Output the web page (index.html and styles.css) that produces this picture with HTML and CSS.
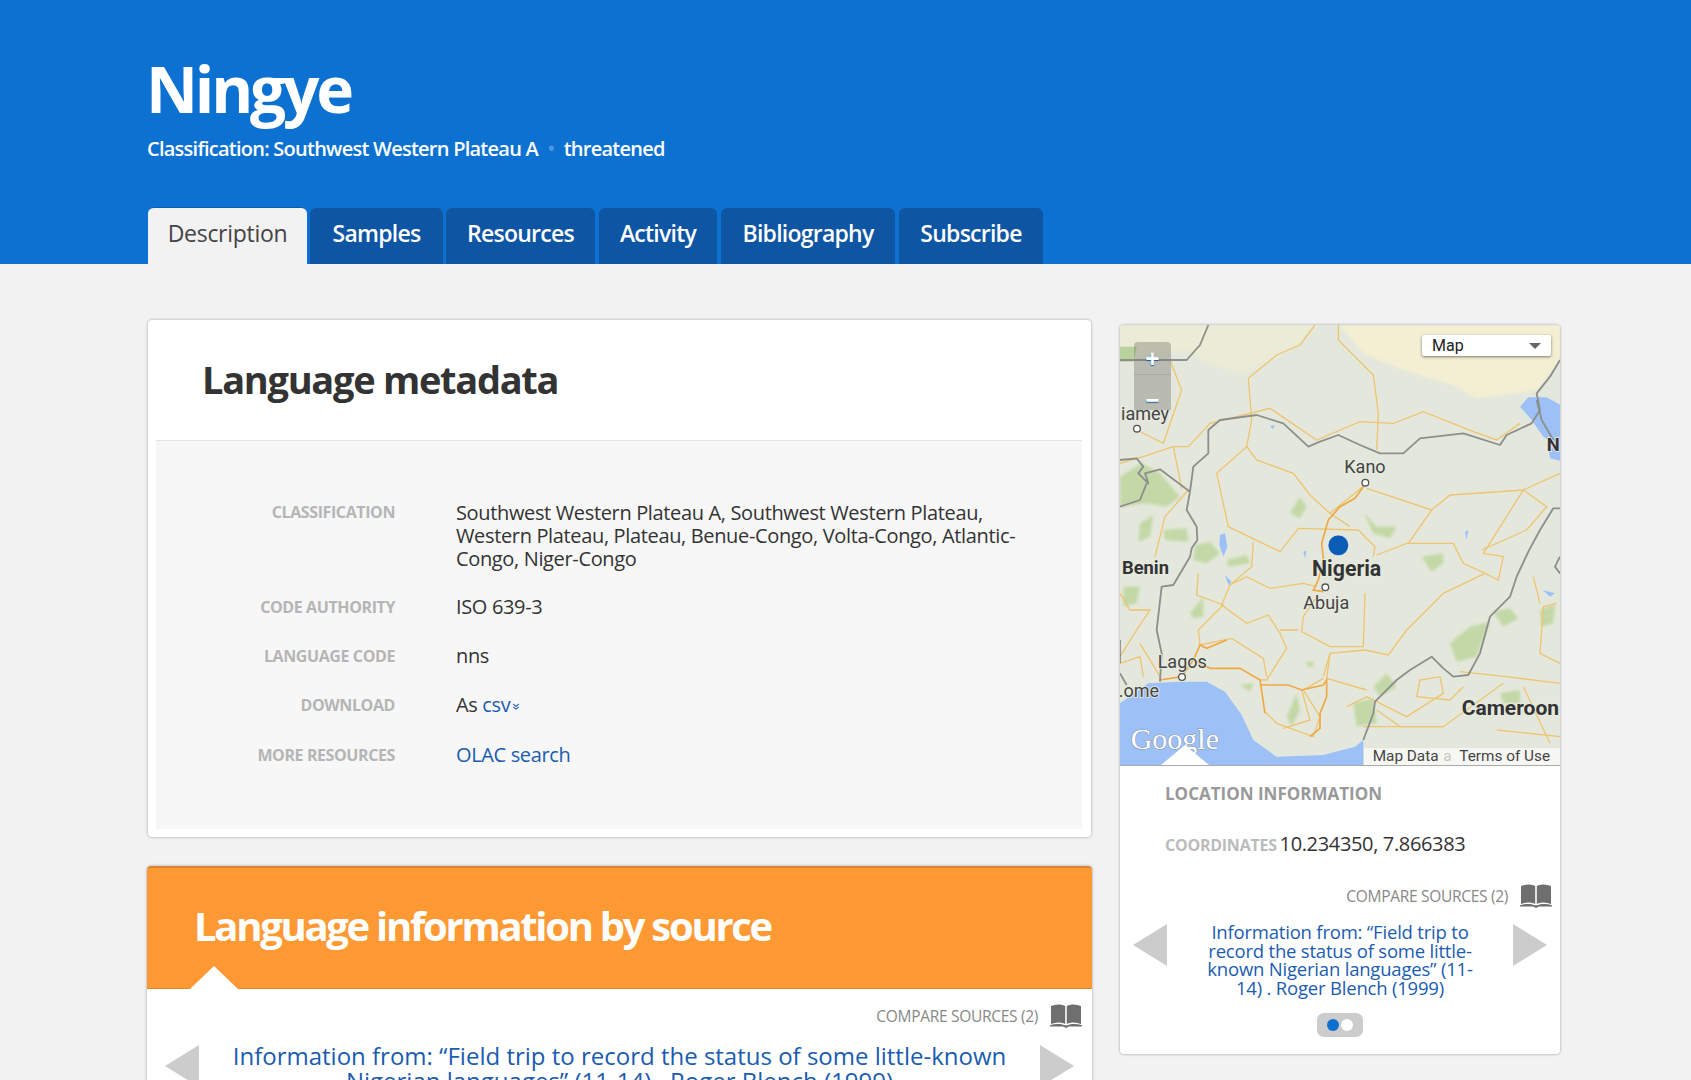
FILE: index.html
```html
<!DOCTYPE html>
<html lang="en">
<head>
    <meta charset="UTF-8">
    <title>Ningye</title>
    <link rel="stylesheet" href="styles.css">
</head>
<body>

<header class="site-header">
    <div class="title-block">
        <h1>Ningye</h1>
        <p class="subtitle">Classification: Southwest Western Plateau A <span class="sep">&bull;</span> threatened</p>
    </div>
    <nav class="tabs">
        <a class="tab active" href="#">Description</a>
        <a class="tab tab-samples" href="#">Samples</a>
        <a class="tab tab-resources" href="#">Resources</a>
        <a class="tab tab-activity" href="#">Activity</a>
        <a class="tab tab-biblio" href="#">Bibliography</a>
        <a class="tab tab-subscribe" href="#">Subscribe</a>
    </nav>
</header>

<main class="page">
    <div class="left-column">
        <section class="card metadata-card">
            <h2>Language metadata</h2>
            <div class="metadata">
                <div class="meta-row">
                    <div class="meta-label">Classification</div>
                    <div class="meta-value">Southwest Western Plateau A, Southwest Western Plateau, Western Plateau, Plateau, Benue-Congo, Volta-Congo, Atlantic-Congo, Niger-Congo</div>
                </div>
                <div class="meta-row">
                    <div class="meta-label">Code authority</div>
                    <div class="meta-value">ISO 639-3</div>
                </div>
                <div class="meta-row">
                    <div class="meta-label">Language code</div>
                    <div class="meta-value">nns</div>
                </div>
                <div class="meta-row">
                    <div class="meta-label">Download</div>
                    <div class="meta-value">As <a href="#">csv</a><span class="csv-arrow">&#187;</span></div>
                </div>
                <div class="meta-row">
                    <div class="meta-label">More resources</div>
                    <div class="meta-value"><a href="#">OLAC search</a></div>
                </div>
            </div>
        </section>

        <section class="card source-card">
            <div class="source-head">
                <h2>Language information by source</h2>
                <span class="notch"></span>
            </div>
            <div class="compare compare-wide">
                <span>Compare sources (2)</span>
                <svg class="book" viewBox="0 0 32 24"><path d="M1 2C6 0 11 0 15.2 2V20C11 18 6 18 1 20ZM16.8 2C21 0 26 0 31 2V20C26 18 21 18 16.8 20ZM0 21.2C5 19.5 11 19.5 14.5 21.2H17.5C21 19.5 27 19.5 32 21.2V22.4H19L16 24 13 22.4H0Z" fill="#6f6f6f"/></svg>
            </div>
            <div class="carousel carousel-wide">
                <span class="arrow arrow-left"></span>
                <a class="carousel-text" href="#">Information from: &ldquo;Field trip to record the status of some little-known Nigerian languages&rdquo; (11-14) . Roger Blench (1999)</a>
                <span class="arrow arrow-right"></span>
            </div>
        </section>
    </div>

    <aside class="card side-card">
        <div class="map">
            <svg class="map-art" viewBox="30 45 1320 1320">
                <defs>
                    <filter id="soft-lg"><feGaussianBlur stdDeviation="5"/></filter>
                    <filter id="soft-sm"><feGaussianBlur stdDeviation="1"/></filter>
                </defs>
                <rect x="30" y="45" width="1320" height="1320" fill="#e4e8dc"/>
                <!-- sahel tint up north -->
                <g filter="url(#soft-lg)">
                    <path d="M690 45H1350V150L1280 240 1100 265 1030 225 880 180 760 130Z" fill="#f4efd2"/>
                    <path d="M30 45H620L560 110 400 190 290 160 230 120 30 150Z" fill="#ebebd6"/>
                </g>
                <path d="M30 110H80L70 155H30Z" fill="#b9d29c"/>
                <!-- green patches -->
                <g fill="#c3d8a6" filter="url(#soft-lg)">
                    <path d="M30 500L95 460 150 490 210 560 170 590 110 580 30 590Z"/>
                    <path d="M540 610L570 560 590 590 570 625Z"/>
                    <path d="M760 605L800 650 860 650 840 685 790 670Z"/>
                    <path d="M90 640L130 615 120 680 85 695Z"/>
                    <path d="M160 660L230 655 235 695 165 690Z"/>
                    <path d="M255 705L300 695 330 730 290 760 250 750Z"/>
                    <path d="M350 750L410 735 420 760 355 770Z"/>
                    <path d="M935 740L1000 730 1000 760 965 785Z"/>
                    <path d="M40 830L90 830 80 880 40 890Z"/>
                    <path d="M240 910L280 860 280 920 250 925Z"/>
                    <path d="M1020 1000L1080 950 1140 935 1100 1040 1040 1055Z"/>
                    <path d="M1150 905L1200 895 1225 925 1180 950Z"/>
                    <path d="M730 1180L790 1165 800 1240 740 1250Z"/>
                    <path d="M530 1220L560 1150 570 1200 545 1250Z"/>
                    <path d="M790 1130L830 1090 860 1130 810 1160Z"/>
                    <path d="M1290 900L1335 880 1330 940 1295 950Z"/>
                    <path d="M1170 1150L1230 1140 1230 1180 1180 1180Z"/>
                    <path d="M390 1125L430 1120 420 1145Z"/>
                    <path d="M590 1055L610 1055 610 1070 590 1070Z"/>
                </g>
                <!-- water -->
                <g fill="#9dc1f7" filter="url(#soft-sm)">
                    <path d="M30 1180L115 1120 210 1115 290 1115 345 1145 395 1215 430 1290 500 1340 640 1335 735 1310 760 1290V1375H20V1180Z"/>
                    <path d="M1230 290L1255 262 1310 262 1360 290V455L1320 445 1315 415 1345 410 1300 380 1265 330Z"/>
                    <path d="M330 675L345 670 352 710 340 740 328 705Z"/>
                    <path d="M345 795L365 815 355 825Z"/>
                    <path d="M1298 840L1335 850 1320 860Z"/>
                    <path d="M580 725L590 722 585 745Z"/>
                    <path d="M1065 665L1075 660 1070 690Z"/>
                    <path d="M480 348L495 345 488 358Z"/>
                </g>
                <!-- state roads -->
                <g fill="none" stroke="#efc470" stroke-width="4" filter="url(#soft-sm)">
                    <path d="M415 205L500 135 570 105 615 45M685 45V90L790 195 805 310 800 420M415 205L425 330 410 410 320 490 355 650 510 725 565 655 745 660 795 710 790 740"/>
                    <path d="M410 410L440 450 550 490 600 555 660 610 720 650M660 610L765 525"/>
                    <path d="M430 695L425 770 360 825 410 800 480 835 580 820 620 830M360 825L335 885 410 940 475 915 510 970 530 1015 470 1110 450 1110"/>
                    <path d="M800 735L890 700 1030 700 1060 760 1125 790 1165 810 1180 740 1120 730 1240 540 1020 555 965 600 770 535M965 600L895 700"/>
                    <path d="M1240 540L1310 590 1250 660 1115 720M1240 540L1350 490M1125 790L1000 850 890 960 835 1035 765 1020 660 1030 640 1100M765 850L760 1010 660 1010 575 965 580 920 620 860"/>
                    <path d="M270 1005L365 985 460 1045 470 1100M510 960L565 960M660 1030L650 1105M640 1105L580 1140 630 1220 610 1280 500 1240 465 1205"/>
                    <path d="M30 460L100 440 190 410 235 410 300 340 480 295 620 390 750 335 850 340 940 305 1090 365 1160 390 1230 340"/>
                    <path d="M80 360L160 400 215 240 180 150M190 410L215 535M235 540L165 620 135 740M30 850L60 900 120 900 80 960 30 1040M90 1000L150 1100M270 1005L265 960 340 885 260 855 265 790"/>
                    <path d="M30 1060L90 1040 100 1100M1350 1060L1290 1030 1300 890 1340 880M1270 800L1290 880M1050 1085L1190 1100 1350 1120M710 1190L770 1160 830 1190 890 1220 1000 1150 990 1100 930 1110 920 1160 1020 1170 1060 1130M800 1200L870 1250 1000 1250 1180 1120"/>
                    <path d="M650 1105L770 1140M575 1140L600 1230 520 1255M760 1250H1000M1240 1130L1320 1300M1160 1260L1350 1280"/>
                </g>
                <!-- highways -->
                <g fill="none" stroke="#f0a843" stroke-width="5" filter="url(#soft-sm)">
                    <path d="M760 530L735 565 690 590 655 630 635 700 640 745 625 810 610 840 640 845"/>
                    <path d="M150 1110L215 1100 250 1050 270 1005 290 1015 350 990M250 1050L300 1075 390 1075 450 1110 465 1210M450 1125L535 1125 575 1140 640 1125 650 1110 650 1160 630 1210 630 1255 600 1280"/>
                </g>
                <!-- borders -->
                <g fill="none" stroke="#8c8f8c" stroke-width="5.5" stroke-linejoin="round" filter="url(#soft-sm)">
                    <path d="M30 150H180L230 150 270 105 295 45"/>
                    <path d="M240 545L250 470 295 430 295 360 330 330 440 315 520 340 595 410 630 395 685 375 750 405 810 430 880 430 930 385 1060 370 1170 405 1190 375 1265 340 1290 300 1280 250 1320 200 1350 150"/>
                    <path d="M240 545L230 600 260 650 262 690 245 715 240 740 190 825 155 830 140 960 155 1030 150 1115"/>
                    <path d="M30 450L80 445 100 470 85 490 115 520 105 490 150 478 240 545M30 590L90 570 110 520M30 1060V990M30 1090L50 1125"/>
                    <path d="M760 1290L790 1210 795 1175 860 1110 900 1080 965 1040 1000 1075 1030 1100 1075 1095 1110 1030 1140 920 1200 860 1220 800 1255 725 1290 660 1330 595 1350 595"/>
                    <path d="M1350 740L1335 770 1350 790"/>
                    <path d="M1280 270L1295 330 1330 390"/>
                </g>
                <!-- city dots -->
                <g fill="#fff" stroke="#555" stroke-width="4">
                    <circle cx="81" cy="356" r="10"/>
                    <circle cx="766" cy="518" r="10"/>
                    <circle cx="646" cy="832" r="10"/>
                    <circle cx="216" cy="1101" r="10"/>
                </g>
                <rect x="762" y="1315" width="588" height="50" fill="#fff" fill-opacity=".65"/>
                <circle cx="685" cy="706" r="31" fill="#0b5cb5" stroke="#fff" stroke-opacity=".6" stroke-width="3"/>
                <g class="map-city">
                    <text x="177" y="330" text-anchor="end">iamey</text>
                    <text x="703" y="490">Kano</text>
                    <text x="580" y="898">Abuja</text>
                    <text x="143" y="1074">Lagos</text>
                    <text x="147" y="1162" text-anchor="end">.ome</text>
                </g>
                <g class="map-country">
                    <text x="36" y="792">Benin</text>
                    <text x="606" y="798" class="map-big">Nigeria</text>
                    <text x="1055" y="1215" class="map-wide">Cameroon</text>
                    <text x="1310" y="422">N</text>
                </g>
                <text class="map-logo" x="62" y="1316">Google</text>
                <text class="map-terms" x="788" y="1354">Map Data</text>
                <text class="map-terms map-ghost" x="1000" y="1354">a</text>
                <text class="map-terms" x="1048" y="1354">Terms of Use</text>
            </svg>
            <div class="zoom-control">
                <span class="zoom-btn">+</span>
                <span class="zoom-btn">&minus;</span>
            </div>
            <div class="map-type">
                <span>Map</span>
                <span class="map-caret"></span>
            </div>
            <span class="notch notch-map"></span>
        </div>
        <div class="location">
            <h3>Location information</h3>
            <p class="coords"><span class="coords-label">Coordinates</span> 10.234350, 7.866383</p>
        </div>
        <div class="compare compare-side">
            <span>Compare sources (2)</span>
            <svg class="book" viewBox="0 0 32 24"><path d="M1 2C6 0 11 0 15.2 2V20C11 18 6 18 1 20ZM16.8 2C21 0 26 0 31 2V20C26 18 21 18 16.8 20ZM0 21.2C5 19.5 11 19.5 14.5 21.2H17.5C21 19.5 27 19.5 32 21.2V22.4H19L16 24 13 22.4H0Z" fill="#6f6f6f"/></svg>
        </div>
        <div class="carousel carousel-side">
            <span class="arrow arrow-left"></span>
            <a class="carousel-text" href="#">Information from: &ldquo;Field trip to record the status of some little-known Nigerian languages&rdquo; (11-14) . Roger Blench (1999)</a>
            <span class="arrow arrow-right"></span>
        </div>
        <div class="pager">
            <span class="dot dot-on"></span>
            <span class="dot"></span>
        </div>
    </aside>
</main>

</body>
</html>
```

FILE: styles.css
```css
html, body {
    height: 1080px;
    overflow: hidden;
}
body {
    margin: 0;
    background-color: #f2f2f2;
    font-family: "Open Sans", Arial, sans-serif;
    color: #333;
}
a {
    color: #1a5cb0;
    text-decoration: none;
}

/* header */
.site-header {
    height: 264px;
    box-sizing: border-box;
    padding: 56px 0 0 148px;
    background-color: #0d71d1;
    color: white;
    display: flex;
    flex-direction: column;
    justify-content: space-between;
}
.site-header h1 {
    margin: 0 0 0 -2px;
    font-size: 64px;
    line-height: 66px;
    font-weight: 700;
    letter-spacing: -3.2px;
}
.subtitle {
    margin: 14px 0 0 -1px;
    font-size: 20px;
    line-height: 26px;
    font-weight: 600;
    letter-spacing: -0.75px;
}
.subtitle .sep {
    color: #4b97e0;
    margin: 0 5px;
}
.tabs {
    display: flex;
    gap: 3px;
}
.tab {
    height: 56px;
    box-sizing: border-box;
    padding-top: 10px;
    text-align: center;
    background-color: #0e55a3;
    color: white;
    font-size: 23px;
    line-height: 30px;
    font-weight: 600;
    letter-spacing: -0.75px;
    border-radius: 6px 6px 0 0;
}
.tab.active {
    width: 159px;
    background-color: #f2f2f2;
    color: #444;
    font-weight: 400;
    letter-spacing: -0.3px;
    border-top: 1px solid #0b5cb5;
    height: 57px;
    margin-top: -1px;
}
.tab-samples { width: 133px; }
.tab-resources { width: 149px; margin-right: 1px; }
.tab-activity { width: 118px; margin-right: 1px; }
.tab-biblio { width: 174px; margin-right: 1px; }
.tab-subscribe { width: 144px; }

/* layout */
.page {
    display: flex;
    align-items: flex-start;
    gap: 29px;
    padding: 56px 0 0 148px;
}
.left-column {
    width: 943px;
    display: flex;
    flex-direction: column;
    gap: 29px;
}
.card {
    background-color: white;
    border-radius: 4px;
    box-shadow: 0 0 3px rgba(0, 0, 0, 0.35);
}

/* metadata */
.metadata-card {
    padding: 0 9px 8px 8px;
}
.metadata-card h2 {
    margin: 0;
    padding: 30px 0 32px 46px;
    font-size: 38px;
    line-height: 58px;
    font-weight: 700;
    letter-spacing: -1.3px;
    color: #333;
    border-bottom: 1px solid #e3e3e3;
}
.metadata {
    background-color: #f7f7f7;
    padding: 60px 0 62px;
    display: flex;
    flex-direction: column;
    gap: 26px;
}
.meta-row {
    display: grid;
    grid-template-columns: 239px 1fr;
    column-gap: 61px;
}
.meta-row + .meta-row .meta-value {
    margin-top: -1px;
}
.meta-label {
    text-align: right;
    text-transform: uppercase;
    color: #b5b5b5;
    font-size: 16px;
    line-height: 23px;
    font-weight: 700;
    letter-spacing: -0.4px;
}
.meta-value {
    width: 570px;
    font-size: 20px;
    line-height: 23px;
    letter-spacing: -0.35px;
    color: #333;
}
.csv-arrow {
    display: inline-block;
    transform: rotate(90deg);
    color: #1a5cb0;
    font-size: 15px;
    margin-left: 4px;
}

/* orange section */
.source-card {
    margin: 0 -1px;
    height: 300px;
}
.source-head {
    position: relative;
    height: 123px;
    box-sizing: border-box;
    padding: 30px 0 0 47px;
    background-color: #ff9933;
    border-top: 2px solid #d9862c;
    border-bottom: 1px solid #e58a2c;
    border-radius: 4px 4px 0 0;
}
.source-head h2 {
    margin: 0;
    color: white;
    font-size: 40px;
    line-height: 56px;
    font-weight: 700;
    letter-spacing: -2.3px;
}
.notch {
    position: absolute;
    left: 43px;
    bottom: -1px;
    width: 0;
    height: 0;
    border-left: 24px solid transparent;
    border-right: 24px solid transparent;
    border-bottom: 23px solid white;
}

/* compare sources + carousel */
.compare {
    display: flex;
    justify-content: flex-end;
    align-items: center;
    color: #888;
    font-size: 15.5px;
    letter-spacing: -0.3px;
    text-transform: uppercase;
    gap: 12px;
}
.compare-wide {
    padding: 15px 10px 0 0;
}
.book {
    width: 32px;
    height: 24px;
}
.carousel {
    display: flex;
    align-items: flex-start;
    justify-content: space-between;
}
.carousel-text {
    text-align: center;
    color: #1a5cb0;
}
.carousel-wide {
    padding: 15px 18px 0;
}
.carousel-wide .carousel-text {
    width: 790px;
    font-size: 24px;
    line-height: 25px;
    letter-spacing: 0;
}
.carousel-wide .arrow {
    margin-top: 2px;
}
.arrow {
    width: 0;
    height: 0;
    border-top: 21px solid transparent;
    border-bottom: 21px solid transparent;
}
.arrow-left {
    border-right: 34px solid #ccc;
}
.arrow-right {
    border-left: 34px solid #ccc;
}

/* sidebar */
.side-card {
    width: 440px;
    height: 729px;
    margin-top: 5px;
}
.map {
    position: relative;
    height: 441px;
    overflow: hidden;
    border-radius: 4px 4px 0 0;
    border-bottom: 1px solid #aaa;
    box-sizing: border-box;
}
.map-art {
    display: block;
    width: 440px;
    height: 440px;
}
.map-city text {
    font-family: Roboto, Arial, sans-serif;
    font-size: 54px;
    fill: #444;
    stroke: #e8ebe2;
    stroke-width: 5px;
    paint-order: stroke;
}
.map-country text {
    font-family: Roboto, Arial, sans-serif;
    font-size: 55px;
    font-weight: 700;
    fill: #333;
    stroke: #e8ebe2;
    stroke-width: 5px;
    paint-order: stroke;
}
.map-country .map-big {
    font-size: 64px;
}
.map-country .map-wide {
    font-size: 63px;
}
.map-logo {
    font-family: "Liberation Serif", serif;
    font-size: 90px;
    fill: #fff;
    stroke: #7f8ea6;
    stroke-width: 3px;
    paint-order: stroke;
}
.map-terms {
    font-family: Roboto, Arial, sans-serif;
    font-size: 46px;
    fill: #444;
}
.map-ghost {
    fill-opacity: 0.3;
}
.zoom-control {
    position: absolute;
    left: 14px;
    top: 17px;
    width: 37px;
    height: 68px;
    display: flex;
    flex-direction: column;
    background-color: rgba(120, 120, 110, 0.4);
    border-radius: 4px 4px 0 0;
}
.zoom-btn {
    flex: 1;
    text-align: center;
    color: white;
    font-size: 25px;
    line-height: 32px;
    font-weight: 700;
    text-shadow: 0 1px 1px #1a5cb0;
}
.zoom-btn + .zoom-btn {
    border-top: 1px solid #aaa;
    padding-top: 8px;
    box-sizing: border-box;
}
.map-type {
    position: absolute;
    right: 9px;
    top: 10px;
    width: 129px;
    height: 21px;
    box-sizing: border-box;
    padding: 0 10px;
    display: flex;
    justify-content: space-between;
    align-items: center;
    background-color: white;
    border-radius: 2px;
    box-shadow: 0 1px 3px rgba(0, 0, 0, 0.5);
    font-family: Roboto, Arial, sans-serif;
    font-size: 16px;
    color: #222;
}
.map-caret {
    width: 0;
    height: 0;
    border-left: 6px solid transparent;
    border-right: 6px solid transparent;
    border-top: 6px solid #666;
}
.notch-map {
    left: 41px;
    bottom: 0;
    border-bottom-width: 20px;
}
.location {
    padding: 16px 0 0 45px;
}
.location h3 {
    margin: 0;
    font-size: 17px;
    line-height: 24px;
    font-weight: 700;
    color: #999;
    text-transform: uppercase;
    letter-spacing: 0;
}
.coords {
    margin: 23px 0 0;
    font-size: 20px;
    line-height: 30px;
    letter-spacing: -0.35px;
    color: #333;
}
.coords-label {
    color: #bbb;
    font-size: 16px;
    font-weight: 700;
    letter-spacing: -0.25px;
    text-transform: uppercase;
    margin-right: -2px;
}
.compare-side {
    padding: 22px 8px 0 0;
    height: 28px;
}
.carousel-side {
    padding: 13px 13px 0;
}
.carousel-side .carousel-text {
    width: 270px;
    font-size: 18.5px;
    line-height: 18.6px;
    letter-spacing: -0.2px;
}
.carousel-side .arrow {
    margin-top: 1px;
}
.pager {
    margin: 16px auto 0;
    width: 46px;
    height: 24px;
    display: flex;
    align-items: center;
    justify-content: center;
    gap: 2px;
    background-color: #ccc;
    border-radius: 7px;
}
.dot {
    width: 12px;
    height: 12px;
    border-radius: 50%;
    background-color: white;
}
.dot-on {
    background-color: #0d6fd0;
}
```
